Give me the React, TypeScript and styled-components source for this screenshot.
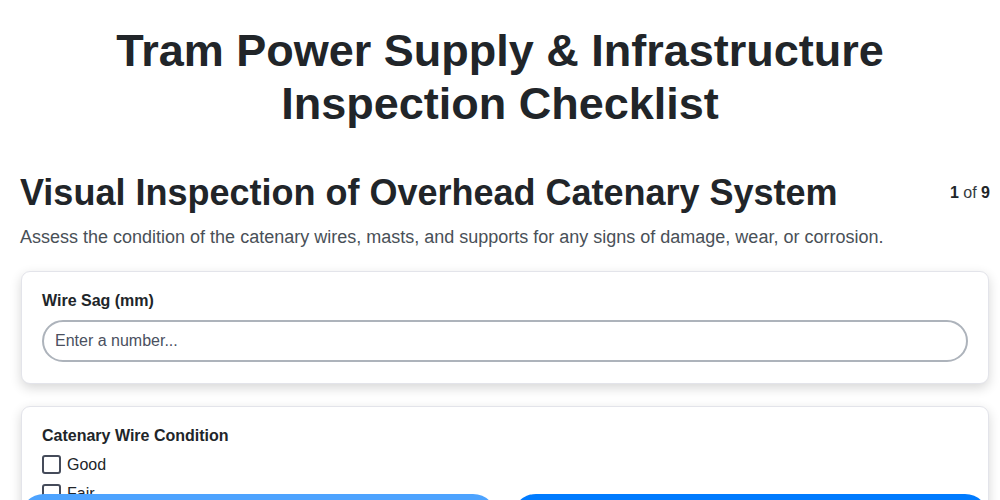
import React from "react";
import styled, { createGlobalStyle } from "styled-components";

const Global = createGlobalStyle`
  html, body { margin: 0; padding: 0; background: #ffffff; }
  body { font-family: "Liberation Sans", Arial, sans-serif; color: #212529; }
  * { box-sizing: border-box; }
`;

const Page = styled.div`
  padding: 0 11px 80px 21px;
`;

const Title = styled.h1`
  margin: 24px 0 0;
  text-align: center;
  font-size: 45px;
  line-height: 53px;
  font-weight: 700;
  color: #212529;
  padding: 0 80px 0 70px;
`;

const StepHeader = styled.div`
  display: flex;
  justify-content: space-between;
  align-items: center;
  margin-top: 41px;
  margin-left: -1px;
`;

const StepTitle = styled.h2`
  margin: 0;
  font-size: 36px;
  line-height: 44px;
  font-weight: 700;
  color: #212529;
`;

const Counter = styled.div`
  font-size: 16px;
  color: #343a40;
  margin-right: -1px;
  b { font-weight: 700; color: #212529; }
`;

const Description = styled.p`
  margin: 10px 0 0;
  margin-left: -1px;
  font-size: 18px;
  line-height: 24px;
  color: #495057;
`;

const Card = styled.div`
  margin-top: 22px;
  background: #fff;
  border: 1px solid #e3e4ea;
  border-radius: 9px;
  padding: 20px 20px 21px 20px;
  box-shadow: 0 4px 12px rgba(0, 0, 0, 0.16);
`;

const Label = styled.div`
  font-size: 16px;
  font-weight: 700;
  line-height: 18px;
  color: #212529;
  margin-bottom: 10px;
`;

const Input = styled.input`
  display: block;
  width: 100%;
  height: 42px;
  border: 2px solid #adb3bb;
  border-radius: 21px;
  padding: 0 11px;
  font-family: "Liberation Sans", Arial, sans-serif;
  font-size: 16px;
  color: #212529;
  outline: none;
  &::placeholder { color: #4a5060; }
`;

const Options = styled.div`
  display: flex;
  flex-direction: column;
  gap: 10px;
`;

const Option = styled.label`
  display: flex;
  align-items: center;
  gap: 6px;
  font-size: 16px;
  color: #212529;
  line-height: 19px;
`;

const Box = styled.span`
  width: 19px;
  height: 19px;
  border: 2px solid #454b5a;
  border-radius: 3px;
  background: #fff;
  flex-shrink: 0;
`;

const Footer = styled.div`
  position: fixed;
  left: 20px;
  right: 11px;
  top: 494px;
  display: flex;
  gap: 15px;
`;

const NavButton = styled.button<{ $disabled?: boolean }>`
  flex: 1;
  height: 48px;
  border: none;
  border-radius: 24px;
  background: ${(p) => (p.$disabled ? "#4da3ff" : "#007bff")};
  color: #fff;
  font-family: "Liberation Sans", Arial, sans-serif;
  font-size: 16px;
  font-weight: 700;
`;

export default function App() {
  return (
    <>
      <Global />
      <Page>
        <Title>Tram Power Supply &amp; Infrastructure Inspection Checklist</Title>
        <StepHeader>
          <StepTitle>Visual Inspection of Overhead Catenary System</StepTitle>
          <Counter>
            <b>1</b> of <b>9</b>
          </Counter>
        </StepHeader>
        <Description>
          Assess the condition of the catenary wires, masts, and supports for any signs of damage, wear, or corrosion.
        </Description>
        <Card>
          <Label>Wire Sag (mm)</Label>
          <Input type="number" placeholder="Enter a number..." />
        </Card>
        <Card>
          <Label>Catenary Wire Condition</Label>
          <Options>
            {["Good", "Fair", "Poor", "Damaged"].map((o) => (
              <Option key={o}>
                <Box />
                {o}
              </Option>
            ))}
          </Options>
        </Card>
      </Page>
      <Footer>
        <NavButton $disabled>Previous</NavButton>
        <NavButton>Next</NavButton>
      </Footer>
    </>
  );
}
